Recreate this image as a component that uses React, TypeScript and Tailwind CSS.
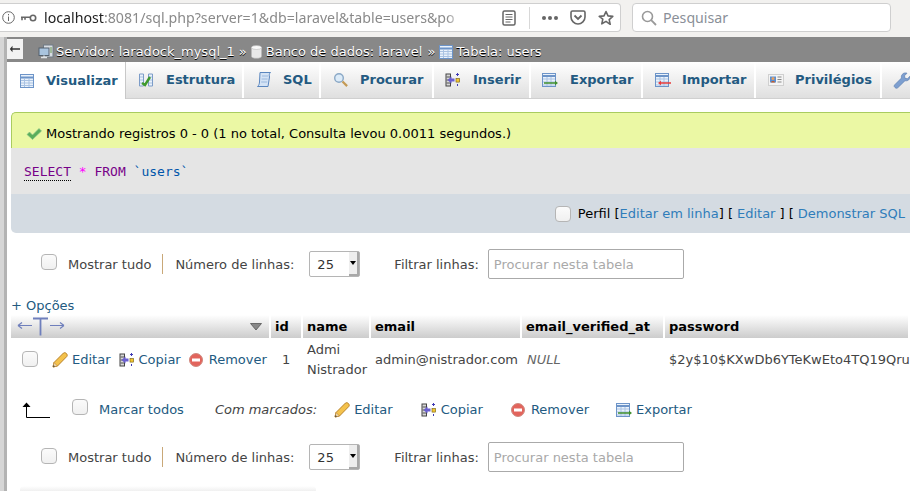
import React from "react";

const Check = ({ cls = "" }: { cls?: string }) => (
  <span className={`block w-[16px] h-[16px] shrink-0 rounded-[4px] border border-[#b5b5b5] bg-gradient-to-b from-[#fbfbfb] to-[#f0f0f0] ${cls}`} />
);

const TableIcon = ({ cls = "" }: { cls?: string }) => (
  <svg width="16" height="16" viewBox="0 0 16 16" className={cls}>
    <rect x="1.5" y="1.5" width="13" height="13" fill="#eaf2fb" stroke="#6d94c8" />
    <path d="M1.5 4.5h13" stroke="#6d94c8" strokeWidth="2" />
    <path d="M2 7.5h12M2 10h12M2 12.5h12M5.5 5v9M10 5v9" stroke="#a9c2e2" />
  </svg>
);

const StructIcon = () => (
  <svg width="16" height="16" viewBox="0 0 16 16">
    <path d="M1.5 2h4v12h-4zM10.5 2h4v12h-4z" fill="#eaf2fb" stroke="#7c9cc8" />
    <path d="M2 5h3M2 8h3M2 11h3M11 5h3M11 8h3M11 11h3" stroke="#a9c2e2" />
    <path d="M4 11l3 2 5-8" fill="none" stroke="#3f9a2c" strokeWidth="2.4" />
  </svg>
);

const SqlIcon = () => (
  <svg width="16" height="18" viewBox="0 0 16 18">
    <path d="M4 1.500h10.500c-1.400 1-1.400 3-1 4.500L12 15.500H1.500c1.400-1 2-3 2-4.500z" fill="#d4e3f5" stroke="#5a86bf" />
    <path d="M6 5h6M5.600 8h6M5.200 11h6" stroke="#9ab8de" />
  </svg>
);

const SearchIcon = () => (
  <svg width="16" height="16" viewBox="0 0 16 16">
    <circle cx="6" cy="6" r="4.300" fill="#dcebf8" stroke="#8aa8c6" strokeWidth="1.400" />
    <path d="M9.500 9.500l4.600 4.600" stroke="#c49a55" strokeWidth="2.200" />
  </svg>
);

const InsertIcon = () => (
  <svg width="16" height="16" viewBox="0 0 16 16">
    <rect x="1" y="2" width="4.500" height="12" fill="#d8d8d8" stroke="#444" />
    <path d="M1.500 5h3.500M1.500 8h3.500M1.500 11h3.500" stroke="#555" />
    <path d="M2.500 8l4-3.600v2.200h3v2.800h-3v2.200z" fill="#6a5fd0" />
    <rect x="11" y="6.500" width="3.600" height="3.600" fill="#f3c531" stroke="#6b5a14" strokeWidth=".6" />
    <path d="M12.500 1v3M11 2.500h3" stroke="#3f39b5" />
    <path d="M12.500 12v2" stroke="#3f39b5" />
  </svg>
);

const ExportIcon = ({ color = "#3f8f2c" }: { color?: string }) => (
  <svg width="16" height="16" viewBox="0 0 16 16" className="overflow-visible">
    <rect x="0.500" y="1.500" width="13" height="13" fill="#eaf2fb" stroke="#6d94c8" />
    <path d="M0.500 4h13" stroke="#6d94c8" strokeWidth="2" />
    <path d="M1 7h12M1 10h12M1 13h12M5 5v9M9 5v9" stroke="#a9c2e2" />
    <path d="M2 10.200h11v-1.400l3 2.200-3 2.200v-1.400H2z" fill={color} />
  </svg>
);

const ImportIcon = () => (
  <svg width="16" height="16" viewBox="0 0 16 16" className="overflow-visible">
    <rect x="0.500" y="1.500" width="13" height="13" fill="#eaf2fb" stroke="#6d94c8" />
    <path d="M0.500 4h13" stroke="#6d94c8" strokeWidth="2" />
    <path d="M1 7h12M1 10h12M1 13h12M5 5v9M9 5v9" stroke="#a9c2e2" />
    <path d="M16 10.200H6V8.800L3 11l3 2.200v-1.400h10z" fill="#e83b3b" />
  </svg>
);

const PrivIcon = () => (
  <svg width="16" height="14" viewBox="0 0 16 14">
    <rect x="0.500" y="1.500" width="15" height="11" fill="#f4f4f4" stroke="#d0d0d0" />
    <rect x="2" y="3.500" width="6" height="6" fill="#5b8fd0" />
    <circle cx="5" cy="5.500" r="1.500" fill="#e8a060" />
    <path d="M3 9.500c0-2 4-2 4 0z" fill="#c45a28" />
    <path d="M9.500 4h4M9.500 6.500h4M9.500 9h4" stroke="#888" />
  </svg>
);

const Wrench = () => (
  <svg width="18" height="18" viewBox="0 0 18 18">
    <path d="M2 16.500c-1.300-1-1-2 0-3l6.500-6.500c-.8-2.500 1.300-5.500 4.500-5l1 .2-2.500 2.600.5 2.500 2.500.5L17 5.200c.5 3.200-2.500 5.200-5 4.500L5 16.500c-1 1-2 1-3 0z" fill="#7d9fd0" stroke="#5d7fb0" strokeWidth=".7" />
  </svg>
);

const Pencil = () => (
  <svg width="16" height="16" viewBox="0 0 16 16">
    <path d="M1 15l1-4.500L11.500 1c1-.6 2.200-.3 3 .6.800.9 1 2 .3 2.900L5.500 14z" fill="#f4c24c" stroke="#b9822a" />
    <path d="M1 15l1-4.500 3.500 3.500z" fill="#f0d9b0" stroke="#b9822a" strokeWidth=".6" />
    <path d="M1 15l.5-2 1.500 1.500z" fill="#444" />
  </svg>
);

const RemoveIcon = () => (
  <svg width="14" height="14" viewBox="0 0 14 14">
    <circle cx="7" cy="7" r="6.500" fill="#e2645c" stroke="#cf8a80" />
    <rect x="3" y="5.500" width="8" height="3" fill="#fff" />
  </svg>
);

const ServerIcon = () => (
  <svg width="16" height="16" viewBox="0 0 16 16">
    <rect x="5.500" y="1" width="9.500" height="12" fill="#d8dde2" stroke="#6f7a86" />
    <rect x="1" y="4" width="10" height="7.500" fill="#a9c4de" stroke="#54616e" />
    <path d="M3 13.500h6M6 11.500v2" stroke="#dfe3e6" strokeWidth="1.400" />
    <path d="M12 4h2M12 6h2M12 8h2" stroke="#6b9a55" />
  </svg>
);

const DbIcon = () => (
  <svg width="11" height="14" viewBox="0 0 11 14">
    <path d="M.5 2.500v9c0 2.400 10 2.400 10 0v-9z" fill="#e8e8e8" stroke="#bbb" strokeWidth=".6" />
    <ellipse cx="5.500" cy="2.500" rx="5" ry="2" fill="#fafafa" stroke="#bbb" strokeWidth=".6" />
  </svg>
);

const ArrowLeft = () => (
  <svg width="12" height="8" viewBox="0 0 12 8">
    <path d="M3.500 0.800L.8 4l2.700 3.200V4.800H11V3.200H3.500z" fill="#333" />
  </svg>
);

const HeaderResize = () => (
  <svg width="48" height="20" viewBox="0 0 48 20">
    <path d="M1 8.500h14M1 8.500l4-3M1 8.500l4 3" fill="none" stroke="#6f7fbc" strokeWidth="1.200" />
    <path d="M16 1.500h15M23.500 1.500v17" fill="none" stroke="#6f7fbc" strokeWidth="1.800" />
    <path d="M33 8.500h14M47 8.500l-4-3M47 8.500l-4 3" fill="none" stroke="#6f7fbc" strokeWidth="1.200" />
  </svg>
);

const SortDown = () => (
  <svg width="12" height="8" viewBox="0 0 12 8">
    <path d="M.5.500h11L6 7z" fill="#888" stroke="#555" strokeWidth=".8" />
  </svg>
);

const MarkArrow = () => (
  <svg width="28" height="16" viewBox="0 0 28 16">
    <path d="M4.500 0.500L.5 5h8z" fill="#000" />
    <path d="M4.500 4v11.500H28" fill="none" stroke="#000" />
  </svg>
);

const tabs: { label: string; icon: React.ReactNode; w: string; gap: string; pl: string }[] = [
  { label: "Estrutura", icon: <StructIcon />, w: "w-[118px]", gap: "gap-[12px]", pl: "pl-[12px]" },
  { label: "SQL", icon: <SqlIcon />, w: "w-[77px]", gap: "gap-[11px]", pl: "pl-[12px]" },
  { label: "Procurar", icon: <SearchIcon />, w: "w-[113px]", gap: "gap-[11px]", pl: "pl-[12px]" },
  { label: "Inserir", icon: <InsertIcon />, w: "w-[97px]", gap: "gap-[12px]", pl: "pl-[11px]" },
  { label: "Exportar", icon: <ExportIcon />, w: "w-[112px]", gap: "gap-[12px]", pl: "pl-[11px]" },
  { label: "Importar", icon: <ImportIcon />, w: "w-[113px]", gap: "gap-[11px]", pl: "pl-[12px]" },
  { label: "Privilégios", icon: <PrivIcon />, w: "w-[126px]", gap: "gap-[11px]", pl: "pl-[12px]" },
];

const Pager = ({ up = "mb-[4px]" }: { up?: string }) => (
  <div className="flex items-center h-[36px] pl-[30px] text-[#333]">
    <Check cls={up} />
    <span className="ml-[11px] pt-[2px] text-[#444]">Mostrar tudo</span>
    <span className="ml-[11px] w-px h-[20px] bg-[#c9a878]" />
    <span className="ml-[12px] pt-[2px] text-[#444]">Número de linhas:</span>
    <span className="ml-[15px] relative flex items-center w-[51px] h-[26px] rounded-[2px] border border-[#b5b5b5] pl-[7px] pt-[2px] text-[#333]">
      25
      <span className="absolute right-0 top-0 bottom-0 w-[10px] bg-[#eeeeee] border-r-2 border-b-2 border-[#a8a8a8] flex items-center justify-center">
        <span className="w-0 h-0 border-x-[3px] border-x-transparent border-t-[4px] border-t-black" />
      </span>
    </span>
    <span className="ml-[34px] pt-[2px] text-[#444]">Filtrar linhas:</span>
    <span className="ml-[9px] flex items-center w-[196px] h-[30px] rounded-[2px] border border-[#aaaaaa] pl-[5px] pt-[2px] text-[#a9a9a9]">
      Procurar nesta tabela
    </span>
  </div>
);

const Action = ({ icon, label, cls = "", gap = "gap-[4px]" }: { icon: React.ReactNode; label: string; cls?: string; gap?: string }) => (
  <span className={`flex items-center ${gap} text-[#235a81] ${cls}`}>
    {icon}
    {label}
  </span>
);

export default function App() {
  return (
    <div className="w-[910px] h-[491px] overflow-hidden bg-white flex flex-col font-['DejaVu_Sans',sans-serif] text-[13px] leading-[20px]">
      {/* browser toolbar */}
      <div className="h-[37px] shrink-0 bg-[#f2f1ef] flex items-start pt-[3px]">
        <div className="w-[621px] h-[29px] bg-white rounded-r-[4px] border border-l-0 border-[#cfcfcf] flex items-center pl-[2px] font-['Noto_Sans',sans-serif] text-[14.200px]">
          <svg width="13" height="13" viewBox="0 0 13 13" className="shrink-0">
            <circle cx="6.500" cy="6.500" r="5.800" fill="none" stroke="#666" />
            <path d="M6.500 5.500v4.500M6.500 3v1.300" stroke="#666" />
          </svg>
          <svg width="16" height="8" viewBox="0 0 16 8" className="ml-[6px] shrink-0">
            <circle cx="12" cy="4" r="2.700" fill="none" stroke="#666" strokeWidth="1.600" />
            <path d="M0 3.200h9M1 3.200v3M4 3.200v2.500" stroke="#666" strokeWidth="1.600" fill="none" />
          </svg>
          <span className="ml-[7px] w-[419px] overflow-hidden whitespace-nowrap text-[#8a8a8a] [mask-image:linear-gradient(to_right,black_96%,transparent)]">
            <span className="text-[#222]">localhost</span>:8081/sql.php?server=1&db=laravel&table=users&po
          </span>
          <svg width="14" height="16" viewBox="0 0 14 16" className="ml-[39px] shrink-0">
            <rect x="1" y="1" width="12" height="14" rx="1.500" fill="none" stroke="#666" strokeWidth="1.500" />
            <path d="M3.500 4.500h7M3.500 7h7M3.500 9.500h7M3.500 12h5" stroke="#666" />
          </svg>
          <span className="ml-[13px] w-px h-[22px] bg-[#d8d8d8]" />
          <span className="ml-[12px] flex gap-[2px]">
            <span className="w-[4px] h-[4px] rounded-full bg-[#666]" />
            <span className="w-[4px] h-[4px] rounded-full bg-[#666]" />
            <span className="w-[4px] h-[4px] rounded-full bg-[#666]" />
          </span>
          <svg width="16" height="15" viewBox="0 0 16 15" className="ml-[12px] shrink-0">
            <path d="M1 2.500c0-.8.6-1.500 1.500-1.500h11c.9 0 1.500.7 1.500 1.500V7c0 3.800-3.300 7-7 7S1 10.800 1 7z" fill="none" stroke="#666" strokeWidth="1.600" />
            <path d="M4.500 5.500L8 9l3.500-3.500" fill="none" stroke="#666" strokeWidth="1.800" />
          </svg>
          <svg width="16" height="16" viewBox="0 0 16 16" className="ml-[12px] shrink-0">
            <path d="M8 1.500l2 4.400 4.800.5-3.600 3.200 1 4.700L8 11.400l-4.200 2.400 1-4.700L1.200 6.400 6 5.900z" fill="none" stroke="#666" strokeWidth="1.600" strokeLinejoin="round" />
          </svg>
        </div>
        <div className="ml-[11px] w-[259px] h-[29px] bg-white rounded-[4px] border border-[#cfcfcf] flex items-center pl-[8px] font-['Noto_Sans',sans-serif] text-[14.200px] text-[#8a8f98]">
          <svg width="16" height="16" viewBox="0 0 16 16">
            <circle cx="6.500" cy="6.500" r="5" fill="none" stroke="#999" strokeWidth="1.600" />
            <path d="M10.200 10.200L15 15" stroke="#999" strokeWidth="1.800" />
          </svg>
          <span className="ml-[6px]">Pesquisar</span>
        </div>
      </div>

      <div className="flex flex-1 min-h-0">
        {/* left edge strip */}
        <div className="w-[7px] shrink-0 bg-[#d6d6d6] border-r-[3px] border-[#b3b3b3]" />
        <div className="flex-1 min-w-0 flex flex-col">
          {/* breadcrumb */}
          <div className="h-[25px] shrink-0 bg-[#888888] flex items-center pt-[4px] text-white whitespace-nowrap [text-shadow:0_1px_0_#000]">
            <span className="w-[16px] h-[20px] -mt-[2px] bg-[#f2f2f2] flex items-center justify-center self-start">
              <ArrowLeft />
            </span>
            <span className="ml-[15px] flex items-center gap-[2px]"><ServerIcon />Servidor: laradock_mysql_1</span>
            <span className="ml-[4px]">»</span>
            <span className="ml-[4px] flex items-center gap-[4px]"><DbIcon />Banco de dados: laravel</span>
            <span className="ml-[5px]">»</span>
            <span className="ml-[3px] flex items-center gap-[2px]"><TableIcon />Tabela: users</span>
          </div>

          {/* tabs */}
          <div className="h-[37px] shrink-0 flex border-b border-[#d0d0d0] font-bold text-[#235a81] whitespace-nowrap">
            <div className="w-[119px] h-[37px] shrink-0 bg-white flex items-center pl-[12px] gap-[11px] border-r border-[#c8c8c8]">
              <TableIcon />
              Visualizar
            </div>
            {tabs.map((t) => (
              <div
                key={t.label}
                className={`${t.w} h-[36px] shrink-0 flex items-center ${t.pl} ${t.gap} bg-gradient-to-b from-white to-[#dfdfdf] border-r-2 border-white`}
              >
                <span className="shrink-0 flex items-center">{t.icon}</span>
                {t.label}
              </div>
            ))}
            <div className="w-[40px] h-[36px] shrink-0 flex items-center pl-[11px] bg-gradient-to-b from-white to-[#dfdfdf]">
              <Wrench />
            </div>
          </div>

          {/* content */}
          <div className="pl-[4px] pt-[13px] flex flex-col">
            <div className="h-[36px] w-[920px] bg-[#ebf8a4] border-t border-l border-[#a9cc5f] rounded-tl-[5px] flex items-center pl-[14px] pt-[6px] text-black whitespace-nowrap">
              <svg width="16" height="14" viewBox="0 0 16 14">
                <path d="M1 7.500l2.500-2.500 3 3L13 1.500l2.500 2.500L6.500 12.500z" fill="#5aae5a" stroke="#8ac48a" strokeWidth=".7" />
              </svg>
              <span className="ml-[4px]">Mostrando registros 0 - 0 (1 no total, Consulta levou 0.0011 segundos.)</span>
            </div>
            <div className="h-[46px] w-[920px] bg-[#e5e5e5] flex items-center pl-[13px] pt-[2px] font-['DejaVu_Sans_Mono',monospace] text-[13px] whitespace-pre">
              <span className="text-[#770088] border-b border-dotted border-black leading-[16px]">SELECT</span>
              <span className="text-[#ff00ff]"> * </span>
              <span className="text-[#770088]">FROM </span>
              <span className="text-[#0055aa]">`users`</span>
            </div>
            <div className="h-[39px] w-[899px] pr-[5px] bg-[#d4dbe2] rounded-bl-[5px] flex items-center justify-end whitespace-nowrap">
              <Check cls="mr-[7px]" />
              <span className="text-black">Perfil [</span>
              <span className="text-[#2f7dba]">Editar em linha</span>
              <span className="text-black">] [</span>
              <span className="text-[#2f7dba] ml-[4px]">Editar</span>
              <span className="text-black ml-[4px]">] [</span>
              <span className="text-[#2f7dba] ml-[4px]">Demonstrar SQL</span>
            </div>

            <div className="mt-[13px]"><Pager /></div>

            <div className="mt-[13px] h-[20px] pt-[2px] flex items-center text-[#235a81] whitespace-nowrap">+ Opções</div>

            {/* table */}
            <div className="w-[899px] grid grid-cols-[260px_32px_68px_151px_143px_1fr] whitespace-nowrap">
              <div className="h-[23px] bg-gradient-to-b from-white to-[#cccccc] border-r-2 border-white flex items-center justify-between pl-[6px] pr-[7px]">
                <HeaderResize />
                <SortDown />
              </div>
              {["id", "name", "email", "email_verified_at", "password"].map((h) => (
                <div key={h} className="h-[23px] bg-gradient-to-b from-white to-[#cccccc] border-r-2 border-white flex items-center pl-[4px] font-bold text-black">
                  {h}
                </div>
              ))}

              <div className="h-[42px] pt-[2px] flex items-center pl-[11px]">
                <Check cls="mb-[2px]" />
                <Action icon={<Pencil />} label="Editar" cls="ml-[14px]" />
                <Action icon={<InsertIcon />} label="Copiar" cls="ml-[8px]" />
                <Action icon={<RemoveIcon />} label="Remover" cls="ml-[8px]" gap="gap-[6px]" />
              </div>
              <div className="h-[42px] pt-[2px] flex items-center pl-[11px] text-[#444]">1</div>
              <div className="h-[42px] pt-[2px] flex items-center pl-[4px] text-[#444] whitespace-pre-line">{"Admi\nNistrador"}</div>
              <div className="h-[42px] pt-[2px] flex items-center pl-[4px] text-[#444]">admin@nistrador.com</div>
              <div className="h-[42px] pt-[2px] flex items-center pl-[5px] italic text-[#666]">NULL</div>
              <div className="h-[42px] pt-[2px] flex items-center pl-[4px] text-[#444]">$2y$10$KXwDb6YTeKwEto4TQ19Qru</div>
            </div>

            {/* with selected */}
            <div className="mt-[10px] h-[40px] flex items-center whitespace-nowrap text-[#235a81]">
              <span className="ml-[11px]"><MarkArrow /></span>
              <Check cls="ml-[22px] mb-[6px]" />
              <span className="ml-[11px]">Marcar todos</span>
              <span className="ml-[31px] italic text-[#444]">Com marcados:</span>
              <Action icon={<Pencil />} label="Editar" cls="ml-[17px]" />
              <Action icon={<InsertIcon />} label="Copiar" cls="ml-[28px]" />
              <Action icon={<RemoveIcon />} label="Remover" cls="ml-[28px]" gap="gap-[6px]" />
              <Action icon={<ExportIcon />} label="Exportar" cls="ml-[27px]" />
            </div>

            <div className="mt-[9px]"><Pager up="mb-[2px]" /></div>
            <div className="mt-[11px] ml-[9px] w-[296px] h-[5px] bg-gradient-to-b from-white to-[#f0f0f0] rounded-t-[4px]" />
          </div>
        </div>
      </div>
    </div>
  );
}
